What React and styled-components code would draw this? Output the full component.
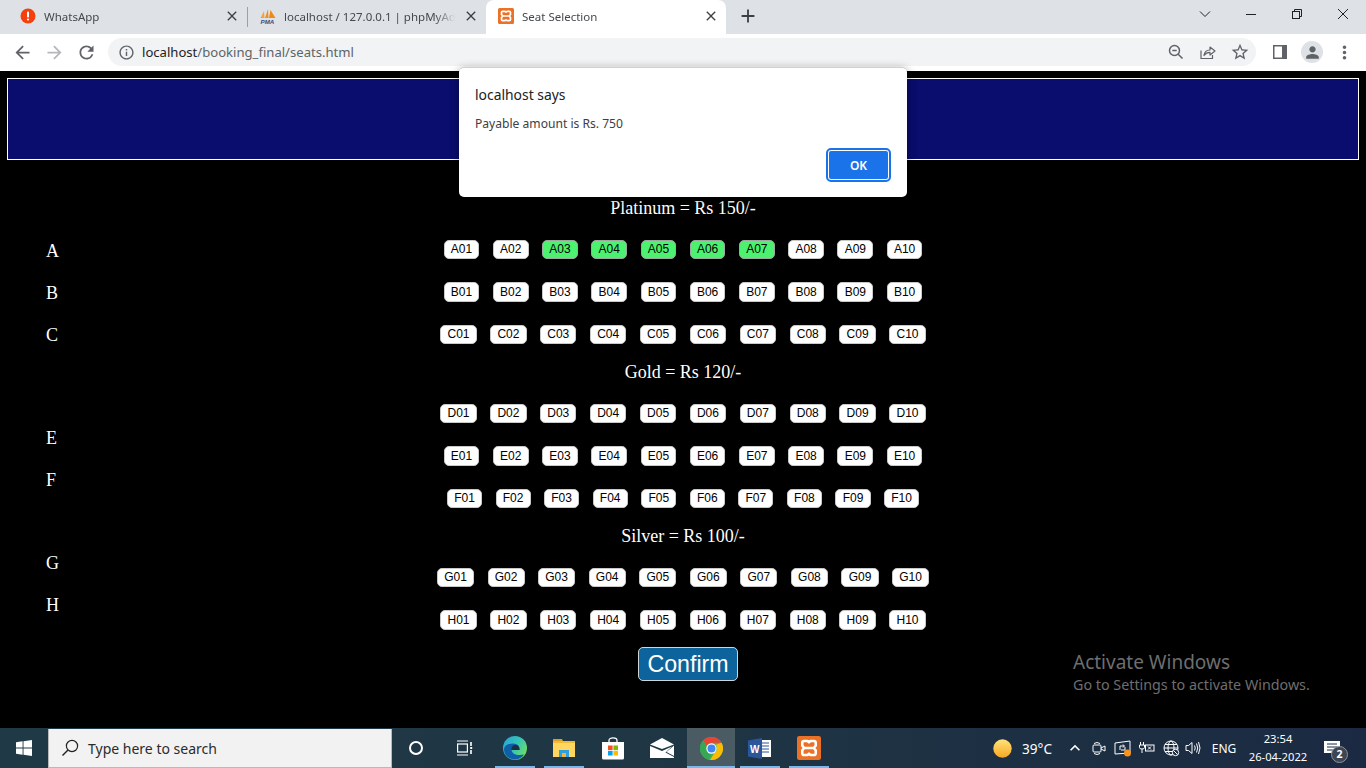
import React from "react";
import styled, { createGlobalStyle } from "styled-components";
import {
  MdArrowBack,
  MdArrowForward,
  MdRefresh,
  MdInfoOutline,
  MdStarBorder,
  MdMoreVert,
  MdClose,
  MdAdd,
  MdPerson,
  MdKeyboardArrowUp,
} from "react-icons/md";

const UI_FONT = `"Noto Sans", "Open Sans", "Liberation Sans", sans-serif`;

const GlobalStyle = createGlobalStyle`
  html, body {
    margin: 0;
    padding: 0;
    background: #000;
    overflow: hidden;
  }
  * {
    box-sizing: border-box;
  }
`;

const Screen = styled.div`
  position: relative;
  width: 1366px;
  height: 768px;
  display: flex;
  flex-direction: column;
  overflow: hidden;
  font-family: ${UI_FONT};
`;

/* browser chrome */
const TabStrip = styled.div`
  height: 34px;
  flex: none;
  display: flex;
  background: #dee1e6;
  padding-left: 8px;
`;
const Tab = styled.div`
  width: ${(p) => p.$width}px;
  height: 34px;
  display: flex;
  align-items: center;
  padding: 0 7px 2px 12px;
  gap: 8px;
  background: ${(p) => (p.$active ? "#fff" : "transparent")};
  border-radius: 8px 8px 0 0;
`;
const TabTitle = styled.span`
  flex: 1;
  min-width: 0;
  font-size: 11.5px;
  color: #45484d;
  white-space: nowrap;
  overflow: hidden;
  mask-image: linear-gradient(90deg, #000 88%, transparent 100%);
`;
const TabClose = styled.span`
  display: flex;
  color: #3c4043;
  font-size: 16px;
`;
const TabDivider = styled.div`
  width: 1px;
  height: 20px;
  margin-top: 7px;
  background: #9aa0a6;
`;
const NewTab = styled.div`
  display: flex;
  align-items: center;
  padding: 0 0 2px 11px;
  color: #3c4043;
  font-size: 22px;
`;
const WindowControls = styled.div`
  margin-left: auto;
  display: flex;
`;
const WindowButton = styled.div`
  width: 46px;
  height: 28px;
  display: flex;
  align-items: center;
  justify-content: center;
  color: #202124;
`;
const Toolbar = styled.div`
  height: 37px;
  flex: none;
  display: flex;
  align-items: flex-start;
  background: #fff;
  padding: 4px 0 0 6px;
`;
const NavButton = styled.div`
  width: 32px;
  height: 28px;
  display: flex;
  align-items: center;
  justify-content: center;
  font-size: 21px;
  color: ${(p) => (p.$muted ? "#b4b7bb" : "#5f6368")};
`;
const Omnibox = styled.div`
  width: 1148px;
  height: 28px;
  margin: 0 8px 0 6px;
  padding: 0 0 0 10px;
  display: flex;
  align-items: center;
  border-radius: 14px;
  background: #f1f3f4;
`;
const SiteInfo = styled.span`
  display: flex;
  font-size: 17px;
  color: #5f6368;
  margin-right: 7px;
`;
const Url = styled.span`
  font-size: 13.1px;
  color: #5f6368;
  b {
    font-weight: 400;
    color: #202124;
  }
`;
const OmniActions = styled.div`
  margin-left: auto;
  display: flex;
`;
const OmniAction = styled.div`
  width: 32px;
  height: 28px;
  display: flex;
  align-items: center;
  justify-content: center;
  font-size: ${(p) => p.$size || 19}px;
  color: #5f6368;
`;
const Avatar = styled.div`
  width: 22px;
  height: 22px;
  border-radius: 50%;
  background: #dee1e6;
  color: #5f6368;
  font-size: 19px;
  display: flex;
  align-items: center;
  justify-content: center;
`;

/* page */
const Page = styled.main`
  flex: 1;
  min-height: 0;
  background: #000;
  padding-top: 7px;
`;
const Banner = styled.header`
  height: 82px;
  margin: 0 7px;
  background: #0a0c6e;
  border: 1px solid #fff;
`;
const SeatArea = styled.div`
  display: grid;
  grid-template-columns: 1fr 700px 1fr;
  padding-top: 31.5px;
`;
const RowLetters = styled.div`
  padding: 39px 0 0 46px;
`;
const LetterGroup = styled.div`
  margin-top: ${(p) => p.$top}px;
`;
const RowLetter = styled.div`
  height: 42px;
  display: flex;
  align-items: center;
  font-family: "Liberation Serif", serif;
  font-size: 18px;
  color: #fff;
`;
const SeatMap = styled.div`
  display: flex;
  flex-direction: column;
  align-items: center;
`;
const ClassTitle = styled.h2`
  margin: 0;
  height: 36.5px;
  line-height: 33px;
  font-family: "Liberation Serif", serif;
  font-size: 18px;
  font-weight: 400;
  color: #fff;
`;
const SeatRow = styled.div`
  height: 42.5px;
  display: flex;
  align-items: center;
  gap: 13.5px;
`;
const Seat = styled.button`
  height: 19.5px;
  padding: 0 6.2px;
  border: 1px solid ${(p) => (p.$selected ? "#9aa89d" : "#c9c9c9")};
  border-radius: 5px;
  background: ${(p) => (p.$selected ? "#4cf26f" : "#fff")};
  color: #000;
  font-family: "Liberation Sans", Arial, sans-serif;
  font-size: 12px;
  line-height: 1;
`;
const ConfirmButton = styled.button`
  width: 100px;
  height: 34px;
  margin: 6px 0 0 10px;
  padding: 0;
  border: 1px solid #cfd6da;
  border-radius: 5px;
  background: #0d639b;
  color: #fff;
  font-family: "Liberation Sans", Arial, sans-serif;
  font-size: 23.2px;
`;
const Watermark = styled.div`
  position: absolute;
  left: 1073px;
  top: 650px;
  color: #6e6e6e;
`;
const WatermarkTitle = styled.div`
  font-size: 19px;
  line-height: 25px;
`;
const WatermarkText = styled.div`
  font-size: 14.3px;
  line-height: 20px;
`;

/* alert */
const Alert = styled.div`
  position: absolute;
  left: 459px;
  top: 67px;
  width: 448px;
  height: 130px;
  padding: 17px 16px 0;
  background: #fff;
  border-radius: 5px;
  border-top: 1px solid #d0d0d0;
  box-shadow: 0 2px 10px rgba(0, 0, 0, 0.4);
  display: flex;
  flex-direction: column;
`;
const AlertTitle = styled.div`
  font-size: 13.9px;
  line-height: 19px;
  color: #202124;
`;
const AlertMessage = styled.div`
  margin-top: 11px;
  font-size: 12.1px;
  line-height: 18px;
  color: #3c4043;
`;
const AlertFooter = styled.div`
  margin-top: 17px;
  padding-right: 2px;
  display: flex;
  justify-content: flex-end;
`;
const OkButton = styled.button`
  width: 61px;
  height: 30px;
  padding: 0;
  border: 1px solid #fff;
  outline: 2px solid #1a73e8;
  border-radius: 3px;
  background: #1a73e8;
  color: #fff;
  font-family: ${UI_FONT};
  font-size: 12px;
  font-weight: 600;
`;

/* taskbar */
const Taskbar = styled.footer`
  height: 40px;
  flex: none;
  display: flex;
  background: linear-gradient(90deg, #1f3a46 0%, #1f3644 45%, #1b2a42 100%);
  color: #fff;
`;
const StartButton = styled.div`
  width: 48px;
  display: flex;
  align-items: center;
  justify-content: center;
`;
const SearchBox = styled.div`
  width: 344px;
  margin-top: 1px;
  padding-left: 12px;
  display: flex;
  align-items: center;
  gap: 9px;
  background: #f2f2f2;
  border: 1px solid #b9b9b9;
  border-width: 0 1px 1px 1px;
  font-size: 14px;
  color: #2b2b2b;
`;
const TaskSlot = styled.div`
  width: ${(p) => p.$width || 49}px;
  position: relative;
  display: flex;
  align-items: center;
  justify-content: center;
  background: ${(p) => (p.$active ? "#4a5b63" : "transparent")};
`;
const RunningMark = styled.span`
  position: absolute;
  bottom: 0;
  left: 50%;
  width: ${(p) => (p.$wide ? 48 : 40)}px;
  height: 2px;
  transform: translateX(-50%);
  background: #76b9ed;
`;
const Tray = styled.div`
  margin-left: auto;
  padding-right: 13px;
  display: flex;
  align-items: center;
`;
const TrayItem = styled.div`
  width: ${(p) => p.$width}px;
  margin-left: ${(p) => p.$gap || 0}px;
  display: flex;
  align-items: center;
  justify-content: center;
  font-size: ${(p) => p.$size || 12}px;
  color: #fff;
`;
const Clock = styled.div`
  width: 66px;
  text-align: center;
  font-size: 11.2px;
  line-height: 18px;
`;
const NotifyBox = styled.div`
  position: relative;
  width: 42px;
  display: flex;
  justify-content: center;
`;
const NotifyBadge = styled.span`
  position: absolute;
  left: 20px;
  top: 5px;
  width: 17px;
  height: 17px;
  border-radius: 50%;
  background: #3d4652;
  border: 1px solid #8c9298;
  font-size: 10.5px;
  font-weight: 700;
  line-height: 15px;
  text-align: center;
`;

/* drawings */
const AlertFavicon = () => (
  <svg width="16" height="16" viewBox="0 0 16 16">
    <circle cx="8" cy="8" r="7.5" fill="#f4400f" />
    <rect x="7" y="3.5" width="2" height="6" rx="0.8" fill="#fff" />
    <circle cx="8" cy="11.5" r="1.1" fill="#fff" />
  </svg>
);

const PmaLogo = () => (
  <svg width="16" height="16" viewBox="0 0 16 16">
    <path d="M0.5 10 L4 3 L4.5 10Z" fill="#f2a33a" />
    <path d="M5 10 L8 1 L8.5 10Z" fill="#ee8f1e" />
    <path d="M9 10 L10.5 2 L15.5 10Z" fill="#f08a12" />
    <text x="0.5" y="15.5" fontFamily="Liberation Sans" fontSize="6.2" fontWeight="700" fontStyle="italic" fill="#3a4a78">PMA</text>
  </svg>
);

const XamppLogo = ({ size = 16 }) => (
  <svg width={size} height={size} viewBox="0 0 16 16">
    <rect width="16" height="16" rx="1.5" fill="#ea7125" />
    <path
      d="M3.5 4.5Q3.5 3.3 4.7 3.3H7L8 4.2L9 3.3H11.3Q12.5 3.3 12.5 4.5V6.4L11.2 8L12.5 9.6V11.5Q12.5 12.7 11.3 12.7H9L8 11.8L7 12.7H4.7Q3.5 12.7 3.5 11.5V9.6L4.8 8L3.5 6.4ZM4.8 8H11.2"
      fill="none"
      stroke="#fff"
      strokeWidth="1.7"
      strokeLinejoin="round"
    />
  </svg>
);

const SystemIcon = ({ children, w = 16, h = 16 }) => (
  <svg width={w} height={h} viewBox={`0 0 ${w} ${h}`} fill="none" stroke="currentColor" strokeWidth="1">
    {children}
  </svg>
);

const ZoomOutIcon = () => (
  <svg width="16" height="16" viewBox="0 0 16 16" fill="none" stroke="#5f6368" strokeWidth="1.5">
    <circle cx="6.5" cy="6.5" r="5" />
    <path d="M4.3 6.5H8.7M10.2 10.2L14.5 14.5" />
  </svg>
);

const ShareIcon = () => (
  <svg width="16" height="16" viewBox="0 0 16 16" fill="none" stroke="#5f6368" strokeWidth="1.2">
    <path d="M1 6.5V14.5H12.5V11" />
    <path d="M4 11.5C4.5 7.5 7.5 6 10 6V3L15 7L10 11V8.3C7.5 8.3 5.5 9.3 4 11.5Z" strokeLinejoin="round" />
  </svg>
);

const SidePanelIcon = () => (
  <svg width="14" height="14" viewBox="0 0 14 14">
    <rect width="14" height="14" fill="#5f6368" />
    <rect x="1.5" y="1.5" width="7.5" height="11" fill="#fff" />
  </svg>
);

const WindowsLogo = () => (
  <svg width="16" height="16" viewBox="0 0 16 16" fill="#fff">
    <path d="M0 2.3L6.6 1.3V7.6H0ZM7.5 1.2L16 0V7.6H7.5ZM0 8.4H6.6V14.7L0 13.7ZM7.5 8.4H16V16L7.5 14.8Z" />
  </svg>
);

const SearchIcon = () => (
  <svg width="18" height="18" viewBox="0 0 18 18" fill="none" stroke="#222" strokeWidth="1.2">
    <circle cx="11" cy="7" r="5.6" />
    <path d="M7 11L1.5 16.5" strokeWidth="1.5" />
  </svg>
);

const CortanaIcon = () => (
  <svg width="16" height="16" viewBox="0 0 16 16" fill="none" stroke="#fff" strokeWidth="2">
    <circle cx="8" cy="8" r="6" />
  </svg>
);

const TaskViewIcon = () => (
  <svg width="18" height="16" viewBox="0 0 18 16" fill="none" stroke="#fff" strokeWidth="1.2">
    <path d="M1 1H12M1 15H12" />
    <rect x="1.6" y="4" width="9.8" height="8" />
    <path d="M15 2V6M15 10V14" strokeWidth="1.6" />
    <rect x="14.2" y="7" width="2" height="2" fill="#fff" stroke="none" />
  </svg>
);

const EdgeIcon = () => (
  <svg width="24" height="24" viewBox="0 0 24 24">
    <defs>
      <linearGradient id="edgeTop" x1="0" y1="0" x2="1" y2="0.6">
        <stop offset="0" stopColor="#2a9fe0" />
        <stop offset="0.6" stopColor="#35c7b0" />
        <stop offset="1" stopColor="#6fdc6a" />
      </linearGradient>
    </defs>
    <circle cx="12" cy="12" r="12" fill="url(#edgeTop)" />
    <path d="M1 14C1 9 6 7.5 10 7.5C15 7.5 17 11 16.5 14L8.5 14C9 18 14 20 21 18.5C18 23 12 25 7.5 22.5C3.5 21 1.5 18 1 14Z" fill="#0f5ea8" />
    <path d="M8.5 14C8 11 10 9 12.5 9C15 9 16.7 11 16.5 14Z" fill="#1d2f40" />
  </svg>
);

const ExplorerIcon = () => (
  <svg width="22" height="20" viewBox="0 0 22 20">
    <path d="M0 1H9L10 3H0Z" fill="#d9a01f" />
    <rect y="3" width="22" height="16" fill="#ffd75e" />
    <rect y="3" width="22" height="2" fill="#f0bb3b" />
    <path d="M6 19V12H16V19H13V15H9V19Z" fill="#2f9fe0" />
    <rect x="9" y="15" width="4" height="4" fill="#f2b63c" />
  </svg>
);

const StoreIcon = () => (
  <svg width="24" height="24" viewBox="0 0 24 24">
    <path d="M8 7V4.5C8 1 16 1 16 4.5V7" fill="none" stroke="#fff" strokeWidth="1.3" />
    <path d="M1 6H23V22Q23 23.5 21.5 23.5H2.5Q1 23.5 1 22Z" fill="#fff" />
    <rect x="7" y="9.5" width="4.6" height="4.6" fill="#f25022" />
    <rect x="12.4" y="9.5" width="4.6" height="4.6" fill="#7fba00" />
    <rect x="7" y="14.9" width="4.6" height="4.6" fill="#00a4ef" />
    <rect x="12.4" y="14.9" width="4.6" height="4.6" fill="#ffb900" />
  </svg>
);

const MailIcon = () => (
  <svg width="24" height="20" viewBox="0 0 24 20">
    <path d="M0 6.5L12 0L24 6.5L12 11Z" fill="#fff" />
    <path d="M0 8L12 13L22 8.5L15.5 14.5L24 19V20H0Z" fill="#fff" />
    <path d="M24 7.5V18L16.5 14Z" fill="#fff" />
  </svg>
);

const ChromeIcon = () => (
  <svg width="23" height="23" viewBox="0 0 24 24">
    <circle cx="12" cy="12" r="12" fill="#4caf50" />
    <path d="M12 0A12 12 0 0 1 22.4 6H12A6 6 0 0 0 6.8 9L3.3 3.7A12 12 0 0 1 12 0Z" fill="#ea4335" />
    <path d="M3.3 3.7L6.8 9A6 6 0 0 0 12 18L8.6 23.5A12 12 0 0 1 3.3 3.7Z" fill="#34a853" />
    <path d="M22.4 6A12 12 0 0 1 12 24H10.5L15 16.8A6 6 0 0 0 16.5 8Z" fill="#fbbc05" />
    <circle cx="12" cy="12" r="5.4" fill="#fff" />
    <circle cx="12" cy="12" r="4.2" fill="#4285f4" />
  </svg>
);

const WordIcon = () => (
  <svg width="23" height="21" viewBox="0 0 23 21">
    <rect x="12" y="2" width="11" height="17" fill="#fff" />
    <path d="M14 5H21M14 8H21M14 11H21M14 14H21" stroke="#2b579a" strokeWidth="1" />
    <path d="M0 2.4L14 0V21L0 18.6Z" fill="#2b579a" />
    <text x="2" y="14.5" fontFamily="Liberation Sans" fontSize="10" fontWeight="700" fill="#fff">W</text>
  </svg>
);

const SunIcon = () => (
  <svg width="19" height="19" viewBox="0 0 19 19">
    <defs>
      <linearGradient id="sun" x1="0" y1="0" x2="0" y2="1">
        <stop offset="0" stopColor="#ffe27a" />
        <stop offset="1" stopColor="#f7a823" />
      </linearGradient>
    </defs>
    <circle cx="9.5" cy="9.5" r="9.2" fill="url(#sun)" />
  </svg>
);

const Seats = ({ letter, selected = [] }) => (
  <SeatRow>
    {Array.from({ length: 10 }, (_, i) => {
      const num = String(i + 1).padStart(2, "0");
      return (
        <Seat key={num} $selected={selected.includes(i + 1)}>
          {letter + num}
        </Seat>
      );
    })}
  </SeatRow>
);

const App = () => {
  return (
    <Screen>
      <GlobalStyle />
      <TabStrip>
        <Tab $width={239}>
          <AlertFavicon />
          <TabTitle>WhatsApp</TabTitle>
          <TabClose><MdClose /></TabClose>
        </Tab>
        <TabDivider />
        <Tab $width={238}>
          <PmaLogo />
          <TabTitle>localhost / 127.0.0.1 | phpMyAdmin</TabTitle>
          <TabClose><MdClose /></TabClose>
        </Tab>
        <Tab $width={240} $active>
          <XamppLogo />
          <TabTitle>Seat Selection</TabTitle>
          <TabClose><MdClose /></TabClose>
        </Tab>
        <NewTab><MdAdd /></NewTab>
        <WindowControls>
          <WindowButton>
            <SystemIcon w={12} h={12}><path d="M1 3.5L6 8.5L11 3.5" /></SystemIcon>
          </WindowButton>
          <WindowButton>
            <SystemIcon w={12} h={12}><path d="M1 6.5H11" /></SystemIcon>
          </WindowButton>
          <WindowButton>
            <SystemIcon w={12} h={12}>
              <rect x="1.5" y="3.5" width="7" height="7" />
              <path d="M3.5 3.5V1.5H10.5V8.5H8.5" />
            </SystemIcon>
          </WindowButton>
          <WindowButton>
            <SystemIcon w={12} h={12}><path d="M1 1L11 11M11 1L1 11" /></SystemIcon>
          </WindowButton>
        </WindowControls>
      </TabStrip>

      <Toolbar>
        <NavButton><MdArrowBack /></NavButton>
        <NavButton $muted><MdArrowForward /></NavButton>
        <NavButton><MdRefresh /></NavButton>
        <Omnibox>
          <SiteInfo><MdInfoOutline /></SiteInfo>
          <Url><b>localhost</b>/booking_final/seats.html</Url>
          <OmniActions>
            <OmniAction><ZoomOutIcon /></OmniAction>
            <OmniAction><ShareIcon /></OmniAction>
            <OmniAction $size={20}><MdStarBorder /></OmniAction>
          </OmniActions>
        </Omnibox>
        <NavButton><SidePanelIcon /></NavButton>
        <NavButton><Avatar><MdPerson /></Avatar></NavButton>
        <NavButton><MdMoreVert /></NavButton>
      </Toolbar>

      <Page>
        <Banner />
        <SeatArea>
          <RowLetters>
            <LetterGroup $top={0}>
              <RowLetter>A</RowLetter>
              <RowLetter>B</RowLetter>
              <RowLetter>C</RowLetter>
            </LetterGroup>
            <LetterGroup $top={61}>
              <RowLetter>E</RowLetter>
              <RowLetter>F</RowLetter>
            </LetterGroup>
            <LetterGroup $top={41}>
              <RowLetter>G</RowLetter>
              <RowLetter>H</RowLetter>
            </LetterGroup>
          </RowLetters>
          <SeatMap>
            <ClassTitle>Platinum = Rs 150/-</ClassTitle>
            <Seats letter="A" selected={[3, 4, 5, 6, 7]} />
            <Seats letter="B" />
            <Seats letter="C" />
            <ClassTitle>Gold = Rs 120/-</ClassTitle>
            <Seats letter="D" />
            <Seats letter="E" />
            <Seats letter="F" />
            <ClassTitle>Silver = Rs 100/-</ClassTitle>
            <Seats letter="G" />
            <Seats letter="H" />
            <ConfirmButton>Confirm</ConfirmButton>
          </SeatMap>
          <div />
        </SeatArea>
      </Page>

      <Taskbar>
        <StartButton><WindowsLogo /></StartButton>
        <SearchBox>
          <SearchIcon />
          <span>Type here to search</span>
        </SearchBox>
        <TaskSlot $width={48}><CortanaIcon /></TaskSlot>
        <TaskSlot $width={50}><TaskViewIcon /></TaskSlot>
        <TaskSlot><EdgeIcon /><RunningMark /></TaskSlot>
        <TaskSlot><ExplorerIcon /><RunningMark /></TaskSlot>
        <TaskSlot><StoreIcon /></TaskSlot>
        <TaskSlot $width={50}><MailIcon /></TaskSlot>
        <TaskSlot $width={48} $active><ChromeIcon /><RunningMark $wide /></TaskSlot>
        <TaskSlot><WordIcon /><RunningMark /></TaskSlot>
        <TaskSlot><XamppLogo size={24} /><RunningMark /></TaskSlot>
        <Tray>
          <TrayItem $width={26}><SunIcon /></TrayItem>
          <TrayItem $width={44} $size={13.6}>39°C</TrayItem>
          <TrayItem $width={24} $gap={4} $size={20}><MdKeyboardArrowUp /></TrayItem>
          <TrayItem $width={24}>
            <SystemIcon>
              <rect x="2" y="5" width="8" height="7" rx="1" />
              <path d="M10 8L14 6V11L10 9M3 3.5Q6 1.5 9 3.5M3 13.5Q6 15.5 9 13.5" />
            </SystemIcon>
          </TrayItem>
          <TrayItem $width={24}>
            <svg width="18" height="17" viewBox="0 0 18 17" fill="none" stroke="#fff" strokeWidth="1">
              <path d="M1 3L16 1V13L1 14Z" />
              <path d="M6 10V6H10M9 4.5L10.5 6L9 7.5M11 7V10H7" />
              <circle cx="13.5" cy="13" r="3.5" fill="#f7931e" stroke="none" />
            </svg>
          </TrayItem>
          <TrayItem $width={24}>
            <SystemIcon w={16} h={14}>
              <path d="M1.5 1V4M4.5 1V4M0.5 4H5.5V6.5Q5.5 8 3 8Q0.5 8 0.5 6.5ZM3 8V12" />
              <rect x="6.5" y="4" width="8.5" height="6" />
              <path d="M9 5.5L12 8.5M12 5.5L9 8.5" />
            </SystemIcon>
          </TrayItem>
          <TrayItem $width={24}>
            <SystemIcon w={17} h={17}>
              <circle cx="8" cy="8" r="7" />
              <ellipse cx="8" cy="8" rx="3" ry="7" />
              <path d="M1 8H15M2 4.5H14M2 11.5H14" />
              <circle cx="12.5" cy="12.5" r="3.2" fill="#1d2c42" />
              <path d="M10.5 10.5L14.5 14.5" />
            </SystemIcon>
          </TrayItem>
          <TrayItem $width={20}>
            <SystemIcon w={16} h={16}>
              <path d="M1 5.5H3.5L7 2.5V13.5L3.5 10.5H1Z" />
              <path d="M9.5 5.5Q11 8 9.5 10.5M11.5 3.5Q14 8 11.5 12.5M13.5 2Q16.5 8 13.5 14" />
            </SystemIcon>
          </TrayItem>
          <TrayItem $width={42}>ENG</TrayItem>
          <Clock>
            <div>23:54</div>
            <div>26-04-2022</div>
          </Clock>
          <NotifyBox>
            <svg width="16" height="15" viewBox="0 0 16 15" fill="#fff">
              <path d="M0 0H16V12H0Z" />
              <path d="M3 3H13M3 6H13M3 9H9" stroke="#1b2a42" strokeWidth="1" />
            </svg>
            <NotifyBadge>2</NotifyBadge>
          </NotifyBox>
        </Tray>
      </Taskbar>

      <Watermark>
        <WatermarkTitle>Activate Windows</WatermarkTitle>
        <WatermarkText>Go to Settings to activate Windows.</WatermarkText>
      </Watermark>

      <Alert>
        <AlertTitle>localhost says</AlertTitle>
        <AlertMessage>Payable amount is Rs. 750</AlertMessage>
        <AlertFooter>
          <OkButton>OK</OkButton>
        </AlertFooter>
      </Alert>
    </Screen>
  );
};

export default App;
